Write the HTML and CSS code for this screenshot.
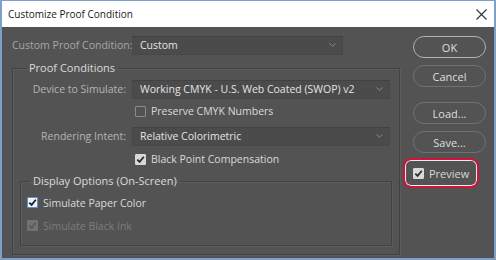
FILE: index.html
```html
<!doctype html>
<html lang="en">
<head>
	<meta charset="UTF-8">
	<title>Customize Proof Condition</title>
	<link rel="stylesheet" href="styles.css">
</head>
<body>
	<div class="window">
		<div class="titlebar">
			<span class="title">Customize Proof Condition</span>
			<svg class="close" width="11" height="11" viewBox="0 0 11 11"><path d="M0.5 0.5L10.5 10.5M10.5 0.5L0.5 10.5" stroke="#333" stroke-width="1.1" fill="none"/></svg>
		</div>
		<div class="body">
			<div class="main">
				<div class="row top-row">
					<span class="lbl wide">Custom Proof Condition:</span>
					<div class="select short">
						<span>Custom</span>
						<svg class="chev" width="7" height="4" viewBox="0 0 7 4"><path d="M0.5 0.5L3.5 3.2L6.5 0.5" stroke="#8a8a8a" fill="none"/></svg>
					</div>
				</div>
				<fieldset class="group outer">
					<legend>Proof Conditions</legend>
					<div class="row r-device">
						<span class="lbl">Device to Simulate:</span>
						<div class="select">
							<span>Working CMYK - U.S. Web Coated (SWOP) v2</span>
							<svg class="chev" width="7" height="4" viewBox="0 0 7 4"><path d="M0.5 0.5L3.5 3.2L6.5 0.5" stroke="#8a8a8a" fill="none"/></svg>
						</div>
					</div>
					<div class="row r-preserve check-row">
						<span class="box"></span>
						<span class="ctext">Preserve CMYK Numbers</span>
					</div>
					<div class="row r-intent">
						<span class="lbl">Rendering Intent:</span>
						<div class="select">
							<span>Relative Colorimetric</span>
							<svg class="chev" width="7" height="4" viewBox="0 0 7 4"><path d="M0.5 0.5L3.5 3.2L6.5 0.5" stroke="#8a8a8a" fill="none"/></svg>
						</div>
					</div>
					<div class="row r-black check-row">
						<span class="box checked"><svg width="9" height="9" viewBox="0 0 9 9"><path d="M1.3 4.6L3.6 6.9L7.8 1.8" stroke="#2c2c2c" stroke-width="1.8" fill="none"/></svg></span>
						<span class="ctext">Black Point Compensation</span>
					</div>
					<fieldset class="group inner">
						<legend>Display Options (On-Screen)</legend>
						<div class="row irow">
							<span class="box checked focus"><svg width="9" height="9" viewBox="0 0 9 9"><path d="M1.3 4.6L3.6 6.9L7.8 1.8" stroke="#1e1e1e" stroke-width="1.8" fill="none"/></svg></span>
							<span class="ctext">Simulate Paper Color</span>
						</div>
						<div class="row irow disabled">
							<span class="box checked"><svg width="9" height="9" viewBox="0 0 9 9"><path d="M1.3 4.6L3.6 6.9L7.8 1.8" stroke="#5a5a5a" stroke-width="1.8" fill="none"/></svg></span>
							<span class="ctext">Simulate Black Ink</span>
						</div>
					</fieldset>
				</fieldset>
			</div>
			<div class="side">
				<div class="btn default">OK</div>
				<div class="btn">Cancel</div>
				<div class="btn load">Load...</div>
				<div class="btn">Save...</div>
				<div class="preview">
					<span class="box checked"><svg width="9" height="9" viewBox="0 0 9 9"><path d="M1.3 4.6L3.6 6.9L7.8 1.8" stroke="#2c2c2c" stroke-width="1.8" fill="none"/></svg></span>
					<span class="ctext">Preview</span>
				</div>
			</div>
		</div>
	</div>
</body>
</html>
```

FILE: styles.css
```css
body {
	margin: 0;
	font-family: "Open Sans", "Noto Sans", sans-serif;
	font-size: 10.5px;
}
.window {
	width: 496px;
	height: 260px;
	box-sizing: border-box;
	border: 2px solid #7d9fcb;
	border-top-width: 1px;
	display: flex;
	flex-direction: column;
	background-color: #535353;
}
.titlebar {
	height: 26px;
	background-color: #fff;
	display: flex;
	align-items: center;
	justify-content: space-between;
	padding: 0 7px 0 6px;
}
.title {
	font-size: 10px;
	color: #1a1a1a;
}
.close {
	margin-top: 1px;
}
.body {
	flex: 1;
	display: flex;
}
.main {
	width: 388px;
	padding: 8px 0 0 10px;
}
.row {
	display: flex;
	align-items: center;
}
.lbl {
	width: 106px;
	margin-right: 6px;
	text-align: right;
	color: #b3b3b3;
	white-space: nowrap;
}
.lbl.wide {
	width: 114px;
	color: #a6a6a6;
}
.top-row {
	height: 20px;
}
.select {
	width: 258px;
	height: 19px;
	box-sizing: border-box;
	border: 1px solid #474747;
	border-top-color: #424242;
	background-color: #4b4b4b;
	display: flex;
	align-items: center;
	justify-content: space-between;
	padding: 0 6px 0 7px;
	color: #e4e4e4;
}
.select.short {
	width: 211px;
}
.group {
	margin: 0;
	min-width: 0;
	border: 1px solid #424242;
	box-shadow: 1px 1px 0 #5c5c5c, inset 1px 1px 0 #5c5c5c;
}
.group legend {
	padding: 0 3px;
	color: #dadada;
	font-size: 11px;
	line-height: 16px;
}
.outer {
	margin-top: 5px;
	padding: 3px 7px 8px 7px;
}
.outer legend {
	margin-left: 6px;
}
.r-device {
	height: 20px;
}
.r-preserve {
	height: 24px;
}
.r-intent {
	height: 26px;
}
.r-black {
	height: 20px;
}
.check-row {
	padding-left: 115px;
}
.box {
	width: 11px;
	height: 11px;
	box-sizing: border-box;
	border: 1px solid #8c8c8c;
	border-radius: 1px;
	margin-right: 5px;
	display: flex;
	align-items: center;
	justify-content: center;
	flex-shrink: 0;
}
.box.checked {
	background-color: #d9d9d9;
	border-color: #d9d9d9;
}
.box.focus {
	background-color: #f2f2f2;
	border-color: #5b8fd6;
}
.ctext {
	color: #dadada;
	white-space: nowrap;
}
.inner {
	margin-top: 4px;
	padding: 2px 6px 8px 6px;
}
.inner legend {
	margin-left: 3px;
}
.irow {
	height: 23px;
}
.disabled .box.checked {
	background-color: #727272;
	border-color: #727272;
}
.disabled .ctext {
	color: #7c7c7c;
}
.side {
	padding: 9px 0 0 3px;
	display: flex;
	flex-direction: column;
	align-items: flex-start;
}
.btn {
	width: 73px;
	height: 22px;
	margin-left: 10px;
	margin-bottom: 7px;
	box-sizing: border-box;
	border: 1px solid #717171;
	border-radius: 11px;
	display: flex;
	align-items: center;
	justify-content: center;
	color: #dedede;
	font-size: 11px;
}
.btn.default {
	border-color: #b0b0b0;
}
.btn.load {
	margin-top: 8px;
}
.preview {
	width: 76px;
	height: 30px;
	box-sizing: border-box;
	margin-top: -2px;
	border: 2px solid #d2123a;
	border-radius: 8px;
	box-shadow: inset 0 0 0 1px #eeeeee;
	display: flex;
	align-items: center;
	padding-left: 8px;
}
.preview .ctext {
	color: #d6d6d6;
	font-size: 11px;
}
```
